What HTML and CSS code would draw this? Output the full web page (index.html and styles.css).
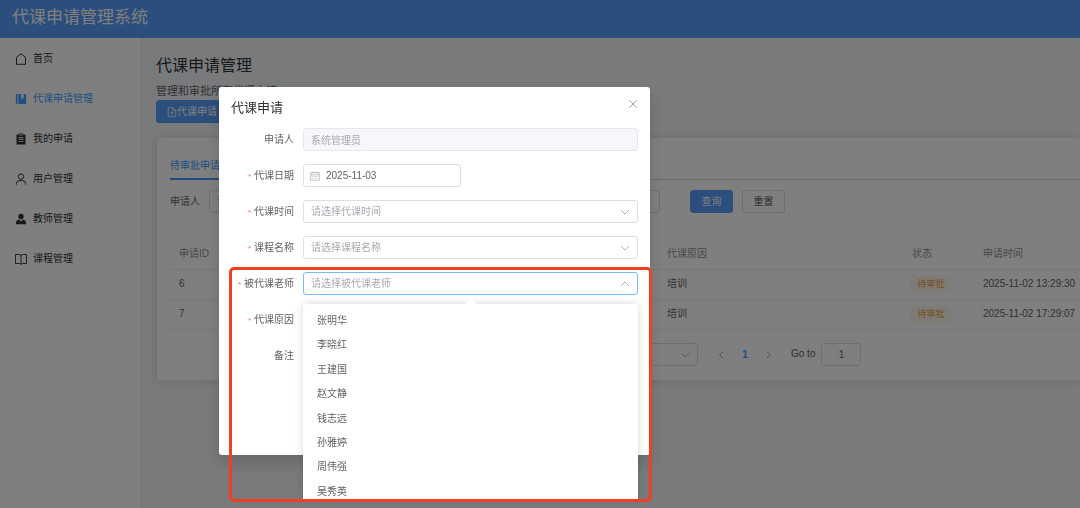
FILE: index.html
```html
<!DOCTYPE html>
<html lang="zh-CN">
<head>
<meta charset="utf-8">
<title>代课申请管理系统</title>
<link rel="stylesheet" href="styles.css">
</head>
<body>
<div class="app">
  <header class="topbar">代课申请管理系统</header>
  <div class="body">
    <nav class="sidebar">
      <a class="menu-item" href="#"><svg class="icon" viewBox="0 0 12 12"><path d="M1.500 11.300V4.300L6 .7l4.500 3.600V11.300z" fill="none" stroke="currentColor"/></svg>首页</a>
      <a class="menu-item active" href="#"><svg class="icon" viewBox="0 0 12 12"><path d="M.8 1h1.700v10H.8zM3.300 1H6v5l1.300-1.100L8.600 6V1H11.200v10H3.300z" fill="currentColor"/></svg>代课申请管理</a>
      <a class="menu-item" href="#"><svg class="icon" viewBox="0 0 12 12"><path d="M1.500 1.500H4V.5h4v1h2.500V11.500h-9zM3.500 4.300v.9h5v-.9zM3.500 6.200v.9h5v-.9zM3.500 8.200v.9h5v-.9zM4.500 1.500v1h3v-1z" fill="currentColor" fill-rule="evenodd"/></svg>我的申请</a>
      <a class="menu-item" href="#"><svg class="icon" viewBox="0 0 12 12"><circle cx="6" cy="3.600" r="2.700" fill="none" stroke="currentColor"/><path d="M1.500 11.500V10.500Q1.500 7.700 4.300 7.700H7.700Q10.500 7.700 10.500 10.500V11.500" fill="none" stroke="currentColor"/></svg>用户管理</a>
      <a class="menu-item" href="#"><svg class="icon" viewBox="0 0 12 12"><circle cx="6" cy="3.500" r="2.700" fill="currentColor"/><path d="M.8 11.200q0-4.200 3.400-4.600L6 8.500l1.800-1.900Q11.200 7 11.200 11.200z" fill="currentColor"/></svg>教师管理</a>
      <a class="menu-item" href="#"><svg class="icon" viewBox="0 0 12 12"><path d="M.5 1.500H4.500Q6 1.500 6 2.800 6 1.500 7.500 1.500h4v9h-4Q6 10.500 6 11.500 6 10.500 4.500 10.500H.5zM6 2.800v8.200" fill="none" stroke="currentColor" stroke-width=".9"/></svg>课程管理</a>
    </nav>
    <main class="main">
      <h1 class="page-title">代课申请管理</h1>
      <p class="page-desc">管理和审批所有代课申请</p>
      <button class="btn primary add" type="button"><svg class="icon-sm" viewBox="0 0 10 10"><path d="M1.200.8H6L8.800 3.400V9.300H1.200zM6 .8v2.600h2.800M5 4.200v3.200M3.400 5.800h3.200" fill="none" stroke="currentColor" stroke-width=".8"/></svg>代课申请</button>
      <section class="card">
        <div class="tabs"><button class="tab" type="button">待审批申请</button></div>
        <form class="search">
          <label class="search-label" for="q">申请人</label>
          <input class="field" id="q" type="text" placeholder="请输入申请人">
          <button class="btn primary" type="button">查询</button>
          <button class="btn" type="button">重置</button>
        </form>
        <table class="table">
          <colgroup><col class="c-id"><col class="c-info"><col class="c-reason"><col class="c-status"><col class="c-time"></colgroup>
          <thead><tr><th>申请ID</th><th></th><th>代课原因</th><th>状态</th><th>申请时间</th></tr></thead>
          <tbody>
            <tr><td>6</td><td></td><td>培训</td><td><span class="tag">待审批</span></td><td>2025-11-02 13:29:30</td></tr>
            <tr><td>7</td><td></td><td>培训</td><td><span class="tag">待审批</span></td><td>2025-11-02 17:29:07</td></tr>
          </tbody>
        </table>
        <div class="pagination">
          <div class="select-box page-size"><select class="field" aria-label="每页条数"><option></option></select><svg class="chevron" viewBox="0 0 10 10"><path d="M1 3l4 4 4-4"/></svg></div>
          <button class="pager" type="button" aria-label="上一页"><svg class="arrow" viewBox="0 0 10 10"><path d="M7 2L3.500 5 7 8"/></svg></button>
          <button class="pager current" type="button">1</button>
          <button class="pager" type="button" aria-label="下一页"><svg class="arrow" viewBox="0 0 10 10"><path d="M3 2l3.500 3L3 8"/></svg></button>
          <label class="goto" for="goto">Go to</label>
          <input class="field goto-input" id="goto" type="text" value="1">
        </div>
      </section>
    </main>
  </div>
</div>

<div class="overlay">
  <div class="dialog" role="dialog" aria-labelledby="dlg-title">
    <div class="dialog-head">
      <h2 class="dialog-title" id="dlg-title">代课申请</h2>
      <button class="close" type="button" aria-label="关闭"><svg class="arrow" viewBox="0 0 10 10"><path d="M1.200 1.200l7.600 7.600M8.800 1.200L1.200 8.800"/></svg></button>
    </div>
    <form class="form">
      <div class="row"><label class="label" for="f1">申请人</label><input class="field" id="f1" type="text" value="系统管理员" disabled></div>
      <div class="row"><label class="label required" for="f2">代课日期</label>
        <div class="date-box"><svg class="calendar" viewBox="0 0 10 10"><path d="M.7 1.500h8.600v7.700H.7zM.7 3.800h8.600M3 .5v2M7 .5v2M2.500 5.500h1M4.500 5.500h1M6.500 5.500h1M2.500 7.300h1M4.500 7.300h1M6.500 7.300h1" fill="none" stroke="currentColor" stroke-width=".7"/></svg><input class="field date" id="f2" type="text" value="2025-11-03"></div></div>
      <div class="row"><label class="label required" for="f3">代课时间</label>
        <div class="select-box"><select class="field" id="f3"><option>请选择代课时间</option></select><svg class="chevron" viewBox="0 0 10 10"><path d="M1 3l4 4 4-4"/></svg></div></div>
      <div class="row"><label class="label required" for="f4">课程名称</label>
        <div class="select-box"><select class="field" id="f4"><option>请选择课程名称</option></select><svg class="chevron" viewBox="0 0 10 10"><path d="M1 3l4 4 4-4"/></svg></div></div>
      <div class="row"><label class="label required" for="f5">被代课老师</label>
        <div class="select-box"><select class="field focus" id="f5"><option>请选择被代课老师</option></select><svg class="chevron" viewBox="0 0 10 10"><path d="M1 7l4-4 4 4"/></svg>
          <div class="dropdown">
            <ul class="options">
              <li class="option">张明华</li><li class="option">李晓红</li><li class="option">王建国</li><li class="option">赵文静</li><li class="option">钱志远</li><li class="option">孙雅婷</li><li class="option">周伟强</li><li class="option">吴秀英</li>
            </ul>
          </div>
        </div></div>
      <div class="row"><label class="label required" for="f6">代课原因</label><input class="field" id="f6" type="text"></div>
      <div class="row"><label class="label" for="f7">备注</label><textarea class="field area" id="f7"></textarea></div>
    </form>
    <div class="highlight"></div>
  </div>
</div>
</body>
</html>
```
FILE: styles.css
```css
* { box-sizing: border-box; }

body {
  margin: 0;
  overflow: hidden;
  background: #f2f5f8;
  color: #606266;
  font: 10px/16px "Liberation Sans", "Noto Sans CJK SC", sans-serif;
}

button, input, select, textarea { font: inherit; color: inherit; }
h1, h2, p, ul { margin: 0; padding: 0; font-weight: 400; }

.app { display: flex; flex-direction: column; min-height: 100vh; }
.topbar {
  height: 38px;
  padding: 0 12px;
  background: #579df8;
  color: #fff;
  font-size: 17px;
  line-height: 36px;
}
.body { display: flex; flex: 1; }
.sidebar {
  display: flex;
  flex: 0 0 142px;
  flex-direction: column;
  padding-top: 1px;
  background: #fff;
  border-right: 1px solid #e6e6e6;
}
.menu-item {
  display: flex;
  align-items: center;
  gap: 6px;
  height: 40px;
  padding-left: 15px;
  color: #303133;
  text-decoration: none;
}
.menu-item.active { color: #409eff; }
.icon { width: 12px; height: 12px; }
.icon-sm { width: 10px; height: 10px; }

.main { flex: 1; min-width: 0; padding: 16px 0 0 14px; }
.page-title { color: #303133; font-size: 16px; line-height: 24px; }
.page-desc { margin-top: 5px; font-size: 11px; line-height: 17px; }

.btn {
  display: flex;
  align-items: center;
  justify-content: center;
  min-width: 43px;
  height: 23px;
  padding: 0 10px;
  background: #fff;
  border: 1px solid #dcdfe6;
  border-radius: 3px;
  white-space: nowrap;
}
.btn.primary { background: #579df8; border-color: #579df8; color: #fff; }
.btn.add { margin-bottom: 14px; }

.card {
  padding: 15px 0 14px 13px;
  background: #fff;
  border: 1px solid #e4e7ed;
  border-right: 0;
  border-radius: 3px 0 0 3px;
  box-shadow: 0 1px 8px rgba(0, 0, 0, .12);
}
.tabs { display: flex; border-bottom: 1px solid #d4d7de; }
.tab {
  height: 27px;
  margin-bottom: -1px;
  padding: 0;
  background: none;
  border: 0;
  border-bottom: 2px solid #409eff;
  color: #409eff;
}
.search { display: flex; align-items: center; padding-top: 10px; }
.search-label { flex: 0 0 39px; }
.search .field { flex: 0 0 451px; margin-right: 30px; }
.search .btn + .btn { margin-left: 9px; }

.field {
  width: 100%;
  height: 23px;
  margin: 0;
  padding: 0 7px;
  background: #fff;
  border: 1px solid #dcdfe6;
  border-radius: 3px;
  outline: 0;
  appearance: none;
}
.field::placeholder { color: #a8abb2; }
.field:disabled { background: #f5f7fa; border-color: #e4e7ed; color: #a8abb2; opacity: 1; }

.table { width: 100%; margin-top: 27px; border-collapse: collapse; table-layout: fixed; }
.c-id { width: 48px; }
.c-info { width: 440px; }
.c-reason { width: 245px; }
.c-status { width: 71px; }
.table th, .table td { height: 30px; padding: 0 0 0 9px; border-bottom: 1px solid #ebeef5; text-align: left; white-space: nowrap; }
.table th { height: 29px; color: #909399; font-weight: 400; }
.table td:nth-child(4) { padding-left: 8px; }
.tag {
  display: block;
  width: 40px;
  background: #fdf6ec;
  border-radius: 3px;
  color: #e6a23c;
  font-size: 9px;
  line-height: 17px;
  text-align: center;
}

.pagination { display: flex; align-items: center; padding: 13px 0 0 428px; }
.pager {
  width: 24px;
  height: 23px;
  padding: 0;
  background: none;
  border: 0;
  line-height: 23px;
}
.pager.current { color: #409eff; font-weight: 700; }
.arrow { width: 10px; height: 10px; fill: none; stroke: #a0a3a9; vertical-align: middle; }
.goto { margin: 0 6px 0 10px; font-size: 10px; }
.goto-input { width: 40px; text-align: center; }

.overlay {
  position: fixed;
  inset: 0;
  padding: 87px 0 0 219px;
  background: rgba(0, 0, 0, .5);
}
.dialog {
  position: relative;
  max-width: 431px;
  padding: 12px 12px 40px;
  background: #fff;
  border-radius: 3px;
  box-shadow: 0 8px 16px rgba(0, 0, 0, .16);
}
.dialog-head { display: flex; align-items: flex-start; justify-content: space-between; height: 29px; }
.dialog-title { color: #303133; font-size: 13px; line-height: 18px; }
.close { width: 10px; height: 10px; padding: 0; background: none; border: 0; line-height: 8px; }
.form { display: flex; flex-direction: column; gap: 13px; }
.row { display: flex; align-items: flex-start; }
.label { flex: 0 0 72px; padding-right: 9px; line-height: 24px; height: 23px; text-align: right; white-space: nowrap; }
.required::before { content: "*"; margin-right: 3px; color: #f56c6c; font-size: 8px; }
.date-box, .select-box { position: relative; flex: 1; }
.date-box { flex: 0 0 158px; }
.select-box.page-size { flex: 0 0 100px; margin-right: 11px; }
.date { padding-left: 22px; }
.calendar { position: absolute; top: 7px; left: 7px; width: 10px; height: 10px; color: #a8abb2; }
.dialog select { color: #a8abb2; }
.field.focus { border-color: #79bbff; }
.chevron {
  position: absolute;
  top: 7px;
  right: 8px;
  width: 10px;
  height: 10px;
  fill: none;
  stroke: #b4b7bd;
  pointer-events: none;
}
.area { height: 71px; resize: none; }

.dropdown {
  position: absolute;
  z-index: 2;
  top: 32px;
  left: 0;
  width: 100%;
  height: 195px;
  background: #fff;
  border-radius: 3px 3px 0 0;
  box-shadow: 0 0 8px rgba(0, 0, 0, .16);
}
.dropdown::before {
  content: "";
  position: absolute;
  top: -4px;
  left: 50%;
  width: 8px;
  height: 8px;
  margin-left: -4px;
  background: #fff;
  transform: rotate(45deg);
}
.options { display: grid; grid-auto-rows: 1fr; height: 200px; padding-top: 5px; list-style: none; }
.option { padding-left: 14px; line-height: 24px; }

.highlight {
  position: absolute;
  z-index: 3;
  top: 180px;
  right: -2px;
  left: 10px;
  height: 235px;
  border: 3px solid #f04024;
  border-radius: 5px;
  pointer-events: none;
}
```
